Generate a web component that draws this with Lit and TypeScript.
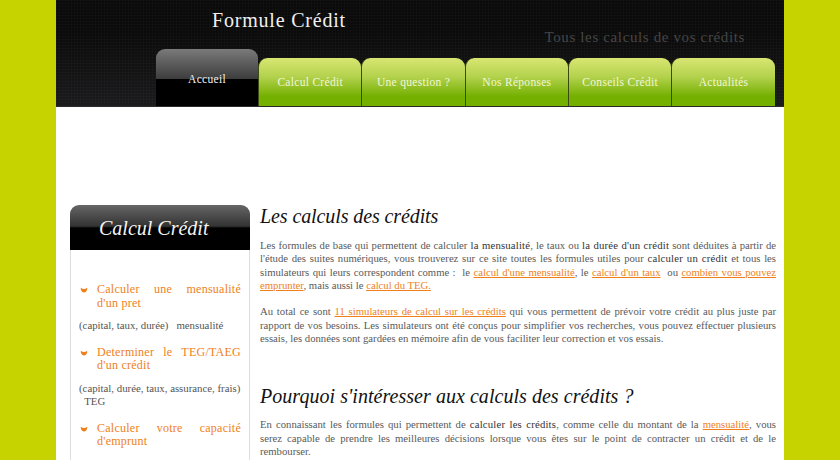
import { LitElement, html, css } from "lit";
import { customElement } from "lit/decorators.js";

const TABS = ["Calcul Crédit", "Une question ?", "Nos Réponses", "Conseils Crédit", "Actualités"];
const chevron = html`<svg class="bullet" viewBox="0 0 8 6" width="8" height="6"><path d="M0.8 0.8 Q4 3.4 7.2 0.8 L7.2 2.2 Q6.2 5.4 4 5.4 Q1.8 5.4 0.8 2.2 Z" fill="#ef7f1a"/></svg>`;

@customElement("app-root")
export class AppRoot extends LitElement {
  static styles = css`
    :host { display: block; height: 460px; overflow: hidden; background: #c6d300; font-family: "Liberation Serif", serif; }
    .page { width: 728px; margin: 0 auto; background: #fff; height: 460px; overflow: hidden; }
    header {
      height: 107px; box-sizing: border-box; border-bottom: 1px solid #2a2a2a; display: flex; flex-direction: column; padding-left: 100px;
      background:
        repeating-linear-gradient(90deg, rgba(255,255,255,.02) 0 1px, transparent 1px 3px),
        repeating-linear-gradient(0deg, rgba(255,255,255,.02) 0 1px, transparent 1px 3px),
        linear-gradient(#0a0a0a, #0a0a0a 30%, #1a1a1c);
    }
    .title { margin: 9px 0 0 56px; height: 22px; font-size: 20px; letter-spacing: .8px; line-height: 22px; color: #f0f0f0; font-weight: normal; }
    .slogan { margin: -3px 39px 0 0; text-align: right; font-size: 15px; letter-spacing: .63px; line-height: 18px; color: #464646; height: 21px; }
    nav { display: flex; align-items: flex-end; height: 57px; margin-top: auto; }
    .tab { width: 103.35px; height: 48px; box-sizing: border-box; padding-top: 18px; text-align: center; color: #f2f6d8; font-size: 11.5px; letter-spacing: .3px; border-radius: 9px 9px 0 0; background: linear-gradient(#d9e672, #b2d14c 40%, #74b000 80%); border-left: 1px solid #3a4a10; }
    .tab.active { width: 102px; height: 57px; padding-top: 24px; border: 0; color: #f4f4f4; background: linear-gradient(#7a7a7a, #3c3c3c 53%, #000 53%); }
    .columns { display: flex; gap: 10px; padding: 98px 8px 0 14px; }
    aside { width: 180px; flex: none; }
    .side-head { height: 45px; box-sizing: border-box; border-radius: 9px 9px 0 0; background: linear-gradient(#666, #333 47%, #000 51%); color: #f4f4f4; font-size: 20px; font-style: italic; padding: 11px 0 0 29px; line-height: 24px; }
    .side-body { border: 1px solid #ddd; border-top: 0; padding: 33px 8px 0 8px; height: 400px; }
    .item { display: flex; color: #ef7f1a; font-size: 12px; letter-spacing: .25px; line-height: 13.5px; text-align: justify; }
    .bullet { flex: none; margin: 4px 9px 0 1px; }
    .item + .sub { margin: 9px 0 13px; }
    .sub { color: #555; font-size: 10.8px; line-height: 13.5px; }
    main { width: 516px; flex: none; }
    h2 { margin: -1px 0 0; font-size: 20px; letter-spacing: -.1px; font-style: italic; font-weight: normal; color: #111; line-height: 24px; }
    p { margin: 0; color: #5a5a5a; font-size: 10.7px; line-height: 13.35px; text-align: justify; }
    b { font-weight: normal; color: #333; letter-spacing: .2px; }
    a { color: #ef7f1a; text-decoration: underline; }
    .first { margin-top: 11px; }
    .gap { margin-top: 13px; }
    h2.h2b { margin-top: 39px; letter-spacing: .04px; }
    .second { margin-top: 10px; }
  `;

  render() {
    return html`<div class="page">
      <header>
        <div class="title">Formule Crédit</div>
        <div class="slogan">Tous les calculs de vos crédits</div>
        <nav>
          <div class="tab active">Accueil</div>
          ${TABS.map((t) => html`<div class="tab">${t}</div>`)}
        </nav>
      </header>
      <div class="columns">
        <aside>
          <div class="side-head">Calcul Crédit</div>
          <div class="side-body">
            <div class="item">${chevron}<span>Calculer une mensualité d'un pret</span></div>
            <div class="sub">(capital, taux, durée) &nbsp; mensualité</div>
            <div class="item">${chevron}<span>Determiner le TEG/TAEG d'un crédit</span></div>
            <div class="sub">(capital, durée, taux, assurance, frais) &nbsp; TEG</div>
            <div class="item">${chevron}<span>Calculer votre capacité d'emprunt</span></div>
            <div class="sub">(mensualité, durée, taux, assurance)</div>
          </div>
        </aside>
        <main>
          <h2>Les calculs des crédits</h2>
          <p class="first">Les formules de base qui permettent de calculer <b>la mensualité</b>, le taux ou <b>la durée d'un crédit</b> sont déduites à partir de l'étude des suites numériques, vous trouverez sur ce site toutes les formules utiles pour <b>calculer un crédit</b> et tous les simulateurs qui leurs correspondent comme : &nbsp;le <a>calcul d'une mensualité</a>, le <a>calcul d'un taux</a> &nbsp;ou <a>combien vous pouvez emprunter</a>, mais aussi le <a>calcul du TEG.</a></p>
          <p class="gap">Au total ce sont <a>11 simulateurs de calcul sur les crédits</a> qui vous permettent de prévoir votre crédit au plus juste par rapport de vos besoins. Les simulateurs ont été conçus pour simplifier vos recherches, vous pouvez effectuer plusieurs essais, les données sont gardées en mémoire afin de vous faciliter leur correction et vos essais.</p>
          <h2 class="h2b">Pourquoi s'intéresser aux calculs des crédits ?</h2>
          <p class="second">En connaissant les formules qui permettent de <b>calculer les crédits</b>, comme celle du montant de la <a>mensualité</a>, vous serez capable de prendre les meilleures décisions lorsque vous êtes sur le point de contracter un crédit et de le rembourser.</p>
        </main>
      </div>
    </div>`;
  }
}
